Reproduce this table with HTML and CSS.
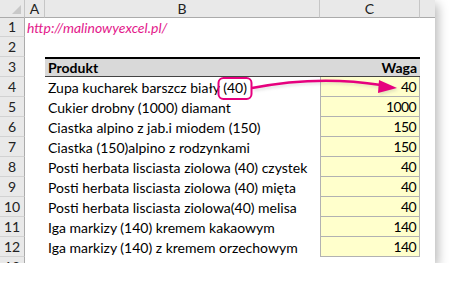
FILE: index.html
```html
<!DOCTYPE html>
<html lang="pl">
<head>
    <meta charset="UTF-8">
    <meta name="viewport" content="width=device-width, initial-scale=1.0">
    <title>Waga produktów</title>
    <link rel="stylesheet" href="styles.css">
</head>
<body>
    <div class="sheet">
        <div class="row col-heads">
            <div class="corner"></div>
            <div class="col-head">A</div>
            <div class="col-head">B</div>
            <div class="col-head">C</div>
            <div class="col-head last"></div>
        </div>

        <div class="row">
            <div class="row-head">1</div>
            <div class="cell link">http://malinowyexcel.pl/</div>
            <div class="cell"></div>
            <div class="cell"></div>
            <div class="cell"></div>
        </div>
        <div class="row">
            <div class="row-head">2</div>
            <div class="cell"></div>
            <div class="cell"></div>
            <div class="cell"></div>
            <div class="cell"></div>
        </div>
        <div class="row">
            <div class="row-head">3</div>
            <div class="cell"></div>
            <div class="cell th">Produkt</div>
            <div class="cell th num">Waga</div>
            <div class="cell"></div>
        </div>

        <div id="rows"></div>

        <div class="row">
            <div class="row-head">13</div>
            <div class="cell"></div>
            <div class="cell"></div>
            <div class="cell"></div>
            <div class="cell"></div>
        </div>

        <!-- callout: ring around the weight and arrow to the Waga column -->
        <svg class="callout" width="450" height="281" viewBox="0 0 450 281">
            <defs>
                <filter id="glow" x="-10%" y="-50%" width="120%" height="200%">
                    <feGaussianBlur stdDeviation="1.6"/>
                </filter>
            </defs>
            <g opacity="0.25" filter="url(#glow)" transform="translate(1.5 2)">
                <path d="M252 88 Q 318 75 381 85" fill="none" stroke="#888" stroke-width="2.5"/>
                <polygon points="397,88 379,80 378,93" fill="#888"/>
            </g>
            <rect x="218.5" y="78" width="33" height="21" rx="5" fill="none" stroke="#e6007e" stroke-width="2"/>
            <path d="M252 88 Q 318 75 381 85" fill="none" stroke="#e6007e" stroke-width="2.5"/>
            <polygon points="397,88 379,80 378,93" fill="#e6007e"/>
        </svg>
    </div>

    <script>
        const products = [
            ['Zupa kucharek barszcz biały (40)', 40],
            ['Cukier drobny (1000) diamant', 1000],
            ['Ciastka alpino z jab.i miodem (150)', 150],
            ['Ciastka (150)alpino z rodzynkami', 150],
            ['Posti herbata lisciasta ziolowa (40) czystek', 40],
            ['Posti herbata lisciasta ziolowa (40) mięta', 40],
            ['Posti herbata lisciasta ziolowa(40) melisa', 40],
            ['Iga markizy (140) kremem kakaowym', 140],
            ['Iga markizy (140) z kremem orzechowym', 140]
        ];

        const rows = document.getElementById('rows');
        products.forEach((item, i) => {
            const row = document.createElement('div');
            row.className = 'row';
            row.innerHTML = `
                <div class="row-head">${i + 4}</div>
                <div class="cell"></div>
                <div class="cell">${item[0]}</div>
                <div class="cell num note">${item[1]}</div>
                <div class="cell"></div>
            `;
            rows.appendChild(row);
        });
    </script>
</body>
</html>
```

FILE: styles.css
```css
body {
    margin: 0;
    background: #fff;
    font-family: Lato, 'Liberation Sans', sans-serif;
    font-size: 14px;
    color: #000;
}
.sheet {
    position: relative;
    width: 435px;
    height: 263px;
    overflow: hidden;
    background: #fff;
    box-shadow: 3px 4px 10px rgba(0, 0, 0, 0.28);
}
.row {
    display: grid;
    grid-template-columns: 25px 20px 275px 100px 15px;
    height: 20px;
}
.col-heads {
    height: 17px;
}
.corner,
.col-head,
.row-head {
    background: #e9e9e9;
    color: #222;
    box-sizing: border-box;
    display: flex;
    align-items: center;
    justify-content: center;
}
.corner {
    position: relative;
    border-right: 1px solid #c6c6c6;
    border-bottom: 1px solid #ababab;
}
.corner::after {
    content: "";
    position: absolute;
    right: 3px;
    bottom: 3px;
    border-style: solid;
    border-width: 0 0 9px 9px;
    border-color: transparent transparent #c8c8c8 transparent;
}
.col-head {
    border-right: 1px solid #c6c6c6;
    border-bottom: 1px solid #ababab;
}
.col-head.last {
    border-right: none;
}
.row-head {
    border-right: 1px solid #ababab;
    border-bottom: 1px solid #d2d2d2;
}
.cell {
    box-sizing: border-box;
    padding: 0 3px;
    display: flex;
    align-items: center;
    white-space: nowrap;
    overflow: visible;
}
.link {
    color: #e3198b;
    font-style: italic;
    padding-left: 2px;
}
.th {
    background: #d9d9d9;
    font-weight: bold;
    border-top: 2px solid #000;
    border-bottom: 1px solid #444;
}
.num {
    justify-content: flex-end;
}
.note {
    background: #ffffcc;
    border: 1px solid #b2b2b2;
    border-top: none;
    letter-spacing: -0.6px;
}
.callout {
    position: absolute;
    top: 0;
    left: 0;
    pointer-events: none;
}
```
